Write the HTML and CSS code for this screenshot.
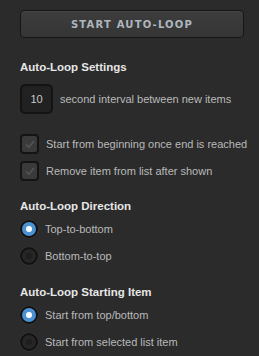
FILE: index.html
```html
<!DOCTYPE html>
<html>
<head>
<meta charset="utf-8">
<link rel="stylesheet" href="styles.css">
</head>
<body>
<div class="panel">
  <button class="start-btn">START AUTO-LOOP</button>

  <h3 class="heading first">Auto-Loop Settings</h3>
  <div class="row interval">
    <div class="num">10</div>
    <span class="label">second interval between new items</span>
  </div>

  <div class="checks">
    <div class="row">
      <span class="check"><svg viewBox="0 0 12 12" width="12" height="12"><path d="M2 6.5 L4.8 9.2 L10 3" fill="none" stroke="#555" stroke-width="1.6"/></svg></span>
      <span class="label">Start from beginning once end is reached</span>
    </div>
    <div class="row">
      <span class="check"><svg viewBox="0 0 12 12" width="12" height="12"><path d="M2 6.5 L4.8 9.2 L10 3" fill="none" stroke="#555" stroke-width="1.6"/></svg></span>
      <span class="label">Remove item from list after shown</span>
    </div>
  </div>

  <h3 class="heading">Auto-Loop Direction</h3>
  <div class="radios">
    <div class="row"><span class="radio on"></span><span class="label">Top-to-bottom</span></div>
    <div class="row"><span class="radio"></span><span class="label">Bottom-to-top</span></div>
  </div>

  <h3 class="heading">Auto-Loop Starting Item</h3>
  <div class="radios">
    <div class="row"><span class="radio on"></span><span class="label">Start from top/bottom</span></div>
    <div class="row"><span class="radio"></span><span class="label">Start from selected list item</span></div>
  </div>
</div>
</body>
</html>
```

FILE: styles.css
```css
html, body {
  margin: 0;
  padding: 0;
  background: #2b2b2b;
  width: 259px;
  height: 356px;
  overflow: hidden;
}
.panel {
  padding: 10px 0 0 20px;
  font-family: "Liberation Sans", Arial, sans-serif;
  font-size: 11px;
  color: #bababa;
  display: flex;
  flex-direction: column;
  white-space: nowrap;
}
.start-btn {
  width: 224px;
  height: 28px;
  border: 1px solid #161616;
  border-radius: 4px;
  background: linear-gradient(#3d3d3d, #353535);
  box-shadow: inset 0 1px 0 #454545;
  color: #aeb6bf;
  font-family: "DejaVu Sans", sans-serif;
  font-weight: bold;
  font-size: 10px;
  letter-spacing: 1.2px;
  padding: 0;
  margin: 0;
}
.heading {
  margin: 0;
  font-size: 11.5px;
  font-weight: bold;
  color: #e6e6e6;
  line-height: 14px;
}
.heading.first { margin-top: 22px; }
.row {
  display: flex;
  align-items: center;
  gap: 7px;
}
.interval {
  margin-top: 10px;
}
.num {
  border: 2px solid #131313;
  border-radius: 5px;
  background: #212121;
  color: #c8c8c8;
  display: flex;
  align-items: center;
  justify-content: center;
  box-sizing: content-box;
  width: 29px;
  height: 26px;
}
.checks {
  margin-top: 20px;
  margin-bottom: 18px;
  display: flex;
  flex-direction: column;
  gap: 7px;
}
.check {
  width: 15px;
  height: 16px;
  border: 2px solid #141414;
  border-radius: 4px;
  background: #3a3a3a;
  display: flex;
  align-items: center;
  justify-content: center;
}
.radios {
  margin-top: 7px;
  margin-bottom: 20px;
  display: flex;
  flex-direction: column;
  gap: 9px;
}
.radio {
  width: 14px;
  height: 14px;
  border: 2px solid #111;
  border-radius: 50%;
  background: #262626;
  position: relative;
  box-shadow: 0 0 0 0.5px #3a3a3a;
}
.radio::after {
  content: "";
  position: absolute;
  left: 4px;
  top: 4px;
  width: 6px;
  height: 6px;
  border-radius: 50%;
  background: #1e1e1e;
}
.radio.on { background: #4a92d4; }
.radio.on::after { background: #ffffff; }
.label { line-height: 18px; }
```
